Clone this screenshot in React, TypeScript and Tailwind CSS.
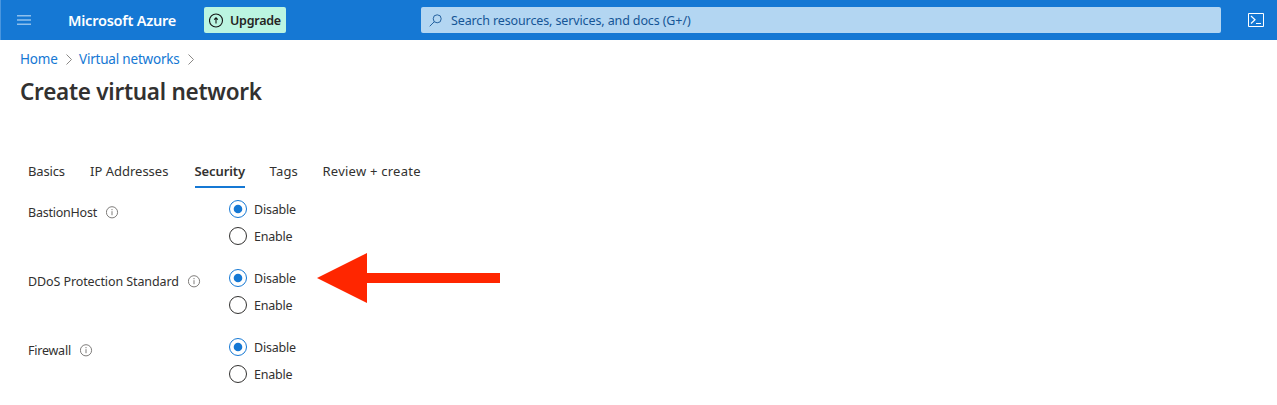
const crumbs = [
  { label: "Home", cls: "w-[38px] tracking-[-0.2px]", chevron: "ml-[7px] mr-[6px]" },
  { label: "Virtual networks", cls: "w-[101px] tracking-[-0.2px]", chevron: "ml-[7px]" },
];

const tabs = [
  { label: "Basics", width: "w-[62px]", tracking: "tracking-[-0.15px]" },
  { label: "IP Addresses", width: "w-[104.5px]", tracking: "tracking-[0px]" },
  { label: "Security", width: "w-[75px]", tracking: "tracking-[-0.1px]", active: true },
  { label: "Tags", width: "w-[53px]", tracking: "tracking-[0.2px]" },
  { label: "Review + create", width: "w-[99px]", tracking: "tracking-[0.24px]" },
];

const settings = [
  { label: "BastionHost", width: "w-[69px]", tracking: "tracking-[-0.23px]" },
  { label: "DDoS Protection Standard", width: "w-[151px]", tracking: "tracking-[-0.1px]" },
  { label: "Firewall", width: "w-[43px]", tracking: "tracking-[-0.23px]" },
];

function Chevron() {
  return (
    <svg className="h-[12px] w-[8px]" viewBox="0 0 8 12" fill="none" stroke="#8a8886">
      <path d="M1.5 1.5l5 5-5 5" />
    </svg>
  );
}

function Info() {
  return (
    <svg className="h-[13px] w-[13px]" viewBox="0 0 13 13" fill="none" stroke="#706e6c" strokeWidth="0.9">
      <circle cx="6" cy="6.3" r="5.6" />
      <path d="M6 5.2v4M6 3v1.2" />
    </svg>
  );
}

function Radio({ label, checked = false }: { label: string; checked?: boolean }) {
  return (
    <label className="flex h-[27px] items-center">
      <svg className="h-[18px] w-[18px]" viewBox="0 0 18 18" fill="none">
        <circle cx="9" cy="9" r="8.5" stroke={checked ? "#1578d4" : "#323130"} />
        {checked && <circle cx="9" cy="9" r="4.3" fill="#1578d4" />}
      </svg>
      <span className="ml-[7px] pt-[3px] text-[12.5px] leading-[18px] tracking-[-0.22px]">{label}</span>
    </label>
  );
}

export default function App() {
  return (
    <div className="relative h-[405px] w-[1277px] overflow-hidden bg-white font-['Noto_Sans',sans-serif] whitespace-nowrap text-[#323130]">
      <header className="flex h-[40px] items-center border-l border-[#4a96de] bg-[#1578d4]">
        <svg className="ml-[16px] h-[12px] w-[14px]" viewBox="0 0 14 12" fill="none" stroke="#8fc0ec" strokeWidth="1.5">
          <path d="M0 1.75h14M0 6h14M0 10.25h14" />
        </svg>
        <span className="ml-[37px] w-[109px] text-[14.5px] leading-5 font-semibold tracking-[-0.23px] text-white">Microsoft Azure</span>
        <button className="ml-[27px] flex h-[26px] w-[82px] items-center rounded-[2px] bg-[#bbf5e1] pl-[5px] text-[#252423]">
          <svg className="h-[15px] w-[15px]" viewBox="0 0 15 15" fill="none" stroke="#151515" strokeWidth="1.1">
            <circle cx="7" cy="7.5" r="6.5" />
            <path d="M7 10.5V5M5.2 6.7L7 4.9l1.8 1.8" />
          </svg>
          <span className="ml-[6px] pt-[2px] text-[12.5px] font-semibold tracking-[-0.25px]">Upgrade</span>
        </button>
        <div className="ml-[135px] flex h-[26px] w-[800px] items-center rounded-[2px] bg-[#b3d6f2] pl-[8px] text-[#155596]">
          <svg className="h-[13px] w-[13px]" viewBox="0 0 13 13" fill="none" stroke="#155596" strokeWidth="0.9">
            <circle cx="8.2" cy="4.8" r="4" />
            <path d="M5.3 7.7L0.7 12.3" />
          </svg>
          <span className="ml-[9px] pt-[2px] text-[12.5px] tracking-[-0.12px]">Search resources, services, and docs (G+/)</span>
        </div>
        <svg className="ml-[27px] h-[14px] w-[16px]" viewBox="0 0 16 14" fill="none" stroke="white">
          <path d="M.5 .5h15v13H.5z" />
          <path d="M3 3l4 3.7-4 3.8M8 10.5h5" strokeWidth="1.2" />
        </svg>
      </header>
      <nav className="flex h-[38px] items-center pl-[20px] text-[13.5px] text-[#1578d4]">
        {crumbs.map((c) => (
          <div key={c.label} className="flex items-center">
            <a className={c.cls}>{c.label}</a>
            <span className={c.chevron}><Chevron /></span>
          </div>
        ))}
      </nav>
      <h1 className="pl-[20px] text-[22.5px] leading-[28px] font-semibold tracking-[-0.27px]">Create virtual network</h1>
      <div className="mt-[50px] ml-[28px] flex h-[32px] text-[13px] leading-[30px]">
        {tabs.map((t) => (
          <div key={t.label} className={`${t.width} ${t.tracking}`}>
            <span className={t.active ? "block h-[32px] w-[50px] border-b-2 border-[#1578d4] font-semibold" : "block"}>{t.label}</span>
          </div>
        ))}
      </div>
      <main className="mt-[7px] ml-[28px]">
        {settings.map((s) => (
          <section key={s.label} className="flex h-[69px]">
            <div className="flex h-[34px] w-[201px] items-center">
              <span className={`pt-[3px] text-[12.5px] ${s.width} ${s.tracking}`}>{s.label}</span>
              <span className="ml-[9px]"><Info /></span>
            </div>
            <div>
              <Radio label="Disable" checked />
              <Radio label="Enable" />
            </div>
          </section>
        ))}
      </main>
      <svg className="absolute top-[253px] left-[317px] h-[50px] w-[183px]" viewBox="0 0 183 50">
        <path d="M0 25L50 0v20h133v10H50v20z" fill="#ff2600" />
      </svg>
    </div>
  );
}
